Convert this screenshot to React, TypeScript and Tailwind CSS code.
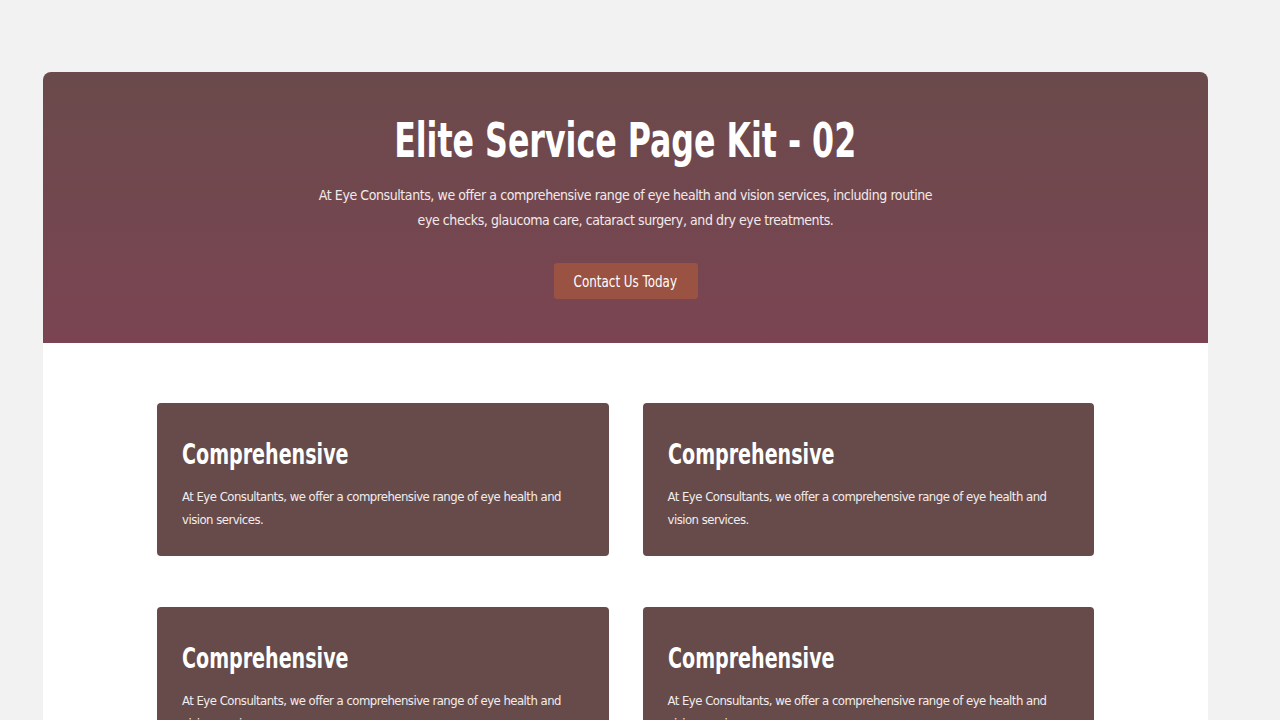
import React from 'react';

const font = { fontFamily: '"DejaVu Sans Condensed", "DejaVu Sans", sans-serif' };

interface Service {
  title: string;
  text: string;
}

const services: Service[] = [
  { title: 'Comprehensive', text: 'At Eye Consultants, we offer a comprehensive range of eye health and vision services.' },
  { title: 'Comprehensive', text: 'At Eye Consultants, we offer a comprehensive range of eye health and vision services.' },
  { title: 'Comprehensive', text: 'At Eye Consultants, we offer a comprehensive range of eye health and vision services.' },
  { title: 'Comprehensive', text: 'At Eye Consultants, we offer a comprehensive range of eye health and vision services.' },
];

function ServiceCard({ title, text }: Service) {
  return (
    <div className="bg-[#664b4a] rounded-[4px] px-[25px] pt-[35px] pb-[25px] h-[153px]">
      <h3 className="text-white text-[28px] font-bold leading-[34px] mb-[13px]">
        <span className="inline-block origin-left scale-x-[0.758]">{title}</span>
      </h3>
      <p className="text-[#f3eded] text-[13px] leading-[23px] tracking-[-0.04em]">{text}</p>
    </div>
  );
}

export default function App() {
  return (
    <div className="min-h-screen bg-[#f2f2f2] pt-[72px]" style={font}>
      <div className="ml-[43px] w-[1165px] bg-white rounded-t-[8px] overflow-hidden">
        {/* Hero */}
        <section className="h-[271px] bg-gradient-to-b from-[#6a4a4b] to-[#7b4453] flex flex-col items-center pt-[40px]">
          <h1 className="text-white text-[48px] font-bold leading-[56px] whitespace-nowrap">
            <span className="inline-block scale-x-[0.733]">Elite Service Page Kit - 02</span>
          </h1>
          <p className="text-[#f2eaea] text-[14px] leading-[25px] tracking-[-0.03em] text-center max-w-[630px] mt-[15px]">
            At Eye Consultants, we offer a comprehensive range of eye health and vision services, including routine eye checks, glaucoma care, cataract surgery, and dry eye treatments.
          </p>
          <button className="mt-[30px] w-[144px] h-[36px] rounded-[3px] bg-[#9a5243] text-white text-[16px] leading-[34px] pt-[2px] whitespace-nowrap">
            <span className="inline-block scale-x-[0.83]">Contact Us Today</span>
          </button>
        </section>

        {/* Services grid */}
        <section className="px-[114px] pt-[60px] pb-[60px]">
          <div className="grid grid-cols-2 gap-x-[34px] gap-y-[51px]">
            {services.map((s, i) => (
              <ServiceCard key={i} title={s.title} text={s.text} />
            ))}
          </div>
        </section>
      </div>
    </div>
  );
}
